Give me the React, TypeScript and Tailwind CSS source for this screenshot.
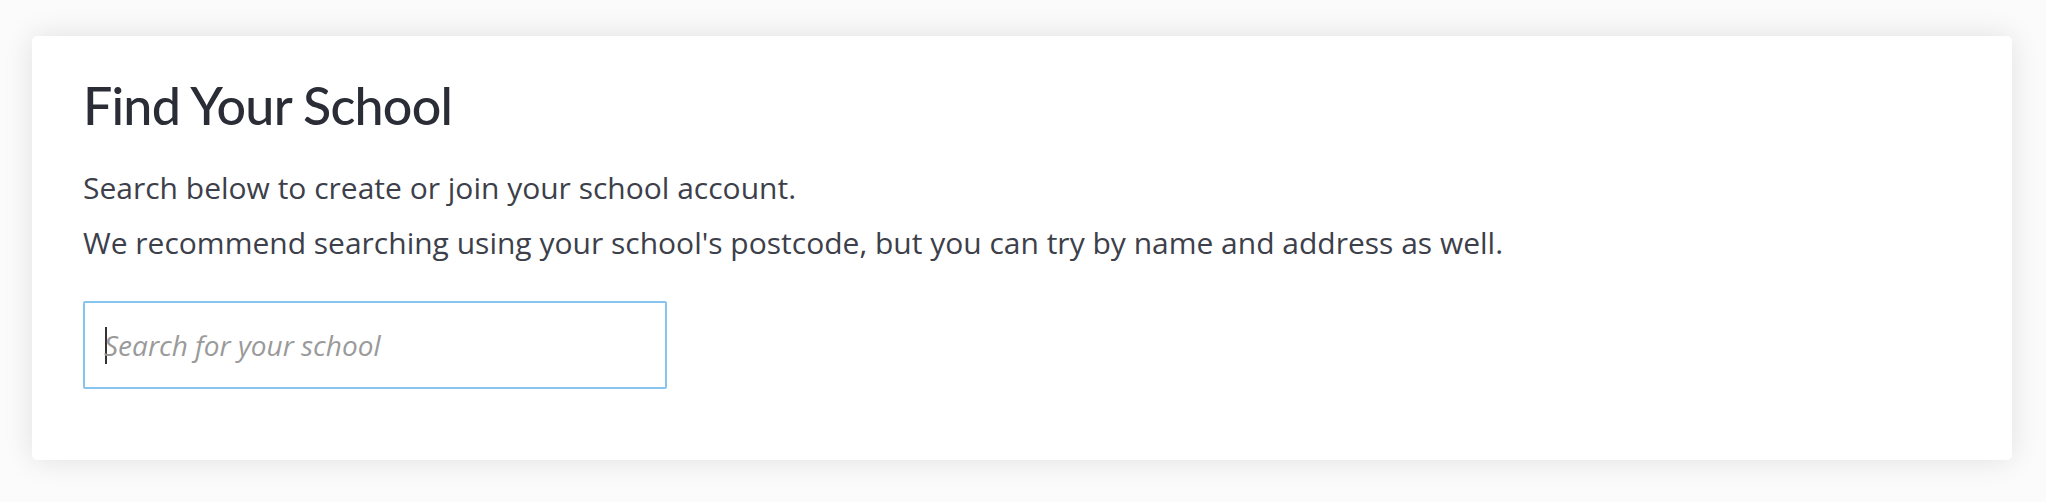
export default function App() {
  return (
    <div className="min-h-[502px] w-full bg-[#fbfbfb] pt-[36px] pl-[32px]">
      <div className="w-[1980px] h-[424px] rounded-[5px] bg-white shadow-[0_0_30px_rgba(0,0,0,0.11)] pl-[51px] pt-[33px]">
        <h1 className="font-['Lato',sans-serif] text-[52px] font-medium leading-[72px] text-[#2a2c36] tracking-[-0.8px]">
          Find Your School
        </h1>
        <div className="mt-[19px] font-['Open_Sans',sans-serif] text-[30px] leading-[55px] text-[#3d3f4a]">
          <p>Search below to create or join your school account.</p>
          <p>We recommend searching using your school's postcode, but you can try by name and address as well.</p>
        </div>
        <div className="mt-[31px] w-[584px] h-[88px] border-2 border-[#88c4f0] rounded-[2px] flex items-center pl-[20px] pr-[20px]">
          <span className="w-[2px] h-[37px] bg-[#333] mr-[-3px]" />
          <input
            className="flex-1 outline-none font-['Open_Sans',sans-serif] italic text-[28px] text-[#333] placeholder:text-[#9a9a9a] bg-transparent"
            placeholder="Search for your school"
          />
        </div>
      </div>
    </div>
  );
}
